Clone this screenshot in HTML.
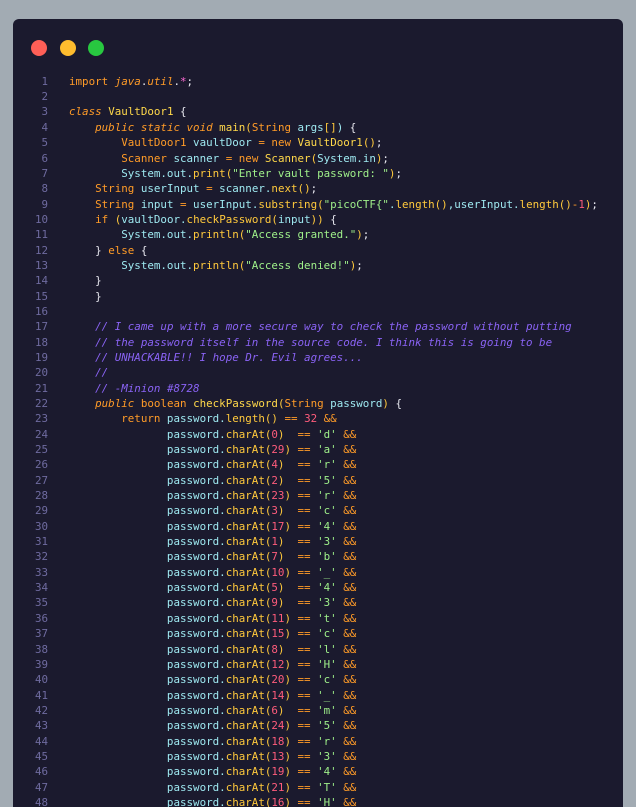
<!DOCTYPE html>
<html><head><meta charset="utf-8"><style>
html,body{margin:0;padding:0;width:636px;height:807px;overflow:hidden;background:#a2abb3;}
.win{position:absolute;left:13px;top:19px;width:610px;height:788px;background:#1b1a2e;border-radius:6px 6px 0 0;overflow:hidden;}
.dot{position:absolute;top:21px;width:16px;height:16px;border-radius:50%;}
pre{position:absolute;left:0;top:54.8px;margin:0;font-family:"DejaVu Sans Mono","Liberation Mono",monospace;font-size:10.85px;line-height:15.34px;color:#9ee8f0;white-space:pre;}
.ln{display:inline-block;width:35px;text-align:right;color:#6f6ba0;margin-right:21px;}
.k{color:#ff9b28}.ki{color:#ff9b28;font-style:italic}.t{color:#ff9b28}.y{color:#ffd84a}.f{color:#ffc93c}
.n{color:#ff5c7c}.s{color:#9ff08a}.c{color:#8a63f5;font-style:italic}.w{color:#e8e8f0}.m{color:#ff6bd6}
</style></head><body>
<div class="win">
<div class="dot" style="left:18px;background:#ff5f57"></div>
<div class="dot" style="left:47px;background:#febc2e"></div>
<div class="dot" style="left:75px;background:#28c840"></div>
<pre>
<span class="ln">1</span><span class="k">import</span> <span class="ki">java</span><span class="w">.</span><span class="ki">util</span><span class="w">.</span><span class="m">*</span><span class="w">;</span>
<span class="ln">2</span>
<span class="ln">3</span><span class="ki">class</span> <span class="y">VaultDoor1</span> <span class="w">{</span>
<span class="ln">4</span>    <span class="ki">public static void</span> <span class="y">main</span><span class="f">(</span><span class="t">String</span> args<span class="f">[]</span>) <span class="w">{</span>
<span class="ln">5</span>        <span class="t">VaultDoor1</span> vaultDoor <span class="k">=</span> <span class="k">new</span> <span class="y">VaultDoor1</span><span class="f">()</span><span class="w">;</span>
<span class="ln">6</span>        <span class="t">Scanner</span> scanner <span class="k">=</span> <span class="k">new</span> <span class="y">Scanner</span><span class="f">(</span>System.in<span class="f">)</span><span class="w">;</span>
<span class="ln">7</span>        System.out.<span class="f">print(</span><span class="s">"Enter vault password: "</span><span class="f">)</span><span class="w">;</span>
<span class="ln">8</span>    <span class="t">String</span> userInput <span class="k">=</span> scanner.<span class="f">next()</span><span class="w">;</span>
<span class="ln">9</span>    <span class="t">String</span> input <span class="k">=</span> userInput.<span class="f">substring(</span><span class="s">"picoCTF{"</span>.<span class="f">length()</span>,userInput.<span class="f">length()</span><span class="k">-</span><span class="n">1</span><span class="f">)</span><span class="w">;</span>
<span class="ln">10</span>    <span class="k">if</span> <span class="f">(</span>vaultDoor.<span class="f">checkPassword(</span>input<span class="f">))</span> <span class="w">{</span>
<span class="ln">11</span>        System.out.<span class="f">println(</span><span class="s">"Access granted."</span><span class="f">)</span><span class="w">;</span>
<span class="ln">12</span>    <span class="w">}</span> <span class="k">else</span> <span class="w">{</span>
<span class="ln">13</span>        System.out.<span class="f">println(</span><span class="s">"Access denied!"</span><span class="f">)</span><span class="w">;</span>
<span class="ln">14</span>    <span class="w">}</span>
<span class="ln">15</span>    <span class="w">}</span>
<span class="ln">16</span>
<span class="ln">17</span>    <span class="c">// I came up with a more secure way to check the password without putting</span>
<span class="ln">18</span>    <span class="c">// the password itself in the source code. I think this is going to be</span>
<span class="ln">19</span>    <span class="c">// UNHACKABLE!! I hope Dr. Evil agrees...</span>
<span class="ln">20</span>    <span class="c">//</span>
<span class="ln">21</span>    <span class="c">// -Minion #8728</span>
<span class="ln">22</span>    <span class="ki">public</span> <span class="k">boolean</span> <span class="y">checkPassword</span><span class="f">(</span><span class="t">String</span> password<span class="f">)</span> <span class="w">{</span>
<span class="ln">23</span>        <span class="k">return</span> password.<span class="f">length()</span> <span class="k">==</span> <span class="n">32</span> <span class="k">&amp;&amp;</span>
<span class="ln">24</span>               password.<span class="f">charAt(</span><span class="n">0</span><span class="f">)</span>  <span class="k">==</span> <span class="s">'d'</span> <span class="k">&amp;&amp;</span>
<span class="ln">25</span>               password.<span class="f">charAt(</span><span class="n">29</span><span class="f">)</span> <span class="k">==</span> <span class="s">'a'</span> <span class="k">&amp;&amp;</span>
<span class="ln">26</span>               password.<span class="f">charAt(</span><span class="n">4</span><span class="f">)</span>  <span class="k">==</span> <span class="s">'r'</span> <span class="k">&amp;&amp;</span>
<span class="ln">27</span>               password.<span class="f">charAt(</span><span class="n">2</span><span class="f">)</span>  <span class="k">==</span> <span class="s">'5'</span> <span class="k">&amp;&amp;</span>
<span class="ln">28</span>               password.<span class="f">charAt(</span><span class="n">23</span><span class="f">)</span> <span class="k">==</span> <span class="s">'r'</span> <span class="k">&amp;&amp;</span>
<span class="ln">29</span>               password.<span class="f">charAt(</span><span class="n">3</span><span class="f">)</span>  <span class="k">==</span> <span class="s">'c'</span> <span class="k">&amp;&amp;</span>
<span class="ln">30</span>               password.<span class="f">charAt(</span><span class="n">17</span><span class="f">)</span> <span class="k">==</span> <span class="s">'4'</span> <span class="k">&amp;&amp;</span>
<span class="ln">31</span>               password.<span class="f">charAt(</span><span class="n">1</span><span class="f">)</span>  <span class="k">==</span> <span class="s">'3'</span> <span class="k">&amp;&amp;</span>
<span class="ln">32</span>               password.<span class="f">charAt(</span><span class="n">7</span><span class="f">)</span>  <span class="k">==</span> <span class="s">'b'</span> <span class="k">&amp;&amp;</span>
<span class="ln">33</span>               password.<span class="f">charAt(</span><span class="n">10</span><span class="f">)</span> <span class="k">==</span> <span class="s">'_'</span> <span class="k">&amp;&amp;</span>
<span class="ln">34</span>               password.<span class="f">charAt(</span><span class="n">5</span><span class="f">)</span>  <span class="k">==</span> <span class="s">'4'</span> <span class="k">&amp;&amp;</span>
<span class="ln">35</span>               password.<span class="f">charAt(</span><span class="n">9</span><span class="f">)</span>  <span class="k">==</span> <span class="s">'3'</span> <span class="k">&amp;&amp;</span>
<span class="ln">36</span>               password.<span class="f">charAt(</span><span class="n">11</span><span class="f">)</span> <span class="k">==</span> <span class="s">'t'</span> <span class="k">&amp;&amp;</span>
<span class="ln">37</span>               password.<span class="f">charAt(</span><span class="n">15</span><span class="f">)</span> <span class="k">==</span> <span class="s">'c'</span> <span class="k">&amp;&amp;</span>
<span class="ln">38</span>               password.<span class="f">charAt(</span><span class="n">8</span><span class="f">)</span>  <span class="k">==</span> <span class="s">'l'</span> <span class="k">&amp;&amp;</span>
<span class="ln">39</span>               password.<span class="f">charAt(</span><span class="n">12</span><span class="f">)</span> <span class="k">==</span> <span class="s">'H'</span> <span class="k">&amp;&amp;</span>
<span class="ln">40</span>               password.<span class="f">charAt(</span><span class="n">20</span><span class="f">)</span> <span class="k">==</span> <span class="s">'c'</span> <span class="k">&amp;&amp;</span>
<span class="ln">41</span>               password.<span class="f">charAt(</span><span class="n">14</span><span class="f">)</span> <span class="k">==</span> <span class="s">'_'</span> <span class="k">&amp;&amp;</span>
<span class="ln">42</span>               password.<span class="f">charAt(</span><span class="n">6</span><span class="f">)</span>  <span class="k">==</span> <span class="s">'m'</span> <span class="k">&amp;&amp;</span>
<span class="ln">43</span>               password.<span class="f">charAt(</span><span class="n">24</span><span class="f">)</span> <span class="k">==</span> <span class="s">'5'</span> <span class="k">&amp;&amp;</span>
<span class="ln">44</span>               password.<span class="f">charAt(</span><span class="n">18</span><span class="f">)</span> <span class="k">==</span> <span class="s">'r'</span> <span class="k">&amp;&amp;</span>
<span class="ln">45</span>               password.<span class="f">charAt(</span><span class="n">13</span><span class="f">)</span> <span class="k">==</span> <span class="s">'3'</span> <span class="k">&amp;&amp;</span>
<span class="ln">46</span>               password.<span class="f">charAt(</span><span class="n">19</span><span class="f">)</span> <span class="k">==</span> <span class="s">'4'</span> <span class="k">&amp;&amp;</span>
<span class="ln">47</span>               password.<span class="f">charAt(</span><span class="n">21</span><span class="f">)</span> <span class="k">==</span> <span class="s">'T'</span> <span class="k">&amp;&amp;</span>
<span class="ln">48</span>               password.<span class="f">charAt(</span><span class="n">16</span><span class="f">)</span> <span class="k">==</span> <span class="s">'H'</span> <span class="k">&amp;&amp;</span>
</pre>
</div>
</body></html>
